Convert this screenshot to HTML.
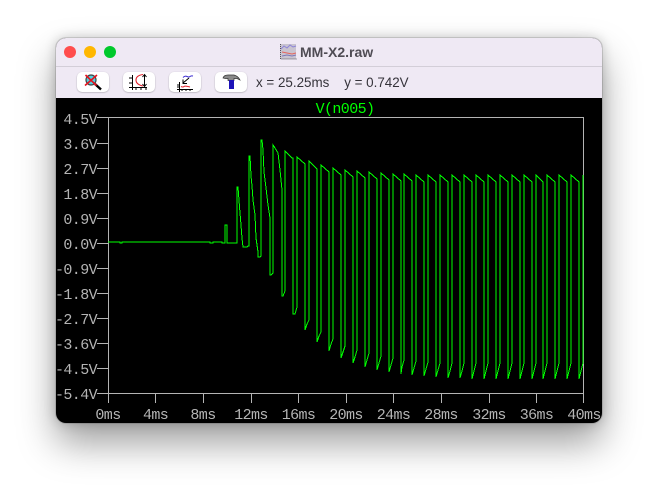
<!DOCTYPE html>
<html><head><meta charset="utf-8"><style>
html,body{margin:0;padding:0;background:#fff;width:658px;height:497px;overflow:hidden}
#w{position:absolute;left:56px;top:38px;width:546px;height:385px;border-radius:10px;background:#000;box-shadow:0 20px 38px rgba(0,0,0,.38),0 0 12px rgba(0,0,0,.2),0 0 0 1px rgba(0,0,0,.12)}
#h{position:absolute;left:0;top:0;width:546px;height:60px;background:#efe9f4;border-radius:10px 10px 0 0}
#sep{position:absolute;left:0;top:28px;width:546px;height:1px;background:#d3ced8}
.d{position:absolute;top:8px;width:12px;height:12px;border-radius:50%}
#t{position:absolute;left:244px;top:6px;font:bold 14px/16px "Liberation Sans",sans-serif;color:#4f4c54}
#c{position:absolute;left:200px;top:37px;font:13.4px/16px "Liberation Sans",sans-serif;color:#35333a;white-space:pre}
.b{position:absolute;top:34px;width:32px;height:20px;background:#fff;border-radius:5px;box-shadow:0 .5px 1.5px rgba(0,0,0,.3)}
svg{position:absolute;left:0;top:0}
text{font-family:"Liberation Mono",monospace;font-size:15px;letter-spacing:-.6px;fill:#b4b4b4}
</style></head><body>
<div id="w">
<div id="h"></div><div id="sep"></div>
<div class="d" style="left:8px;background:#ff4d4d"></div>
<div class="d" style="left:28px;background:#ffb700"></div>
<div class="d" style="left:48px;background:#00c92c"></div>
<div id="t">MM-X2.raw</div>
<div class="b" style="left:21px"></div><div class="b" style="left:67px"></div><div class="b" style="left:113px"></div><div class="b" style="left:159px"></div>
<div id="c">x = 25.25ms    y = 0.742V</div>
</div>
<svg width="658" height="497" viewBox="0 0 658 497">
<!-- title icon -->
<rect x="280" y="44" width="16" height="15" fill="#c9c4d0"/>
<path d="M281 49l3-3 3 2 3-3 3 2 3-1" fill="none" stroke="#8d84d8" stroke-width="1"/>
<path d="M282 52l5 1 5 1 4-1" fill="none" stroke="#e5655e" stroke-width="1"/>
<path d="M282 56l5-1 5 1 4-1" fill="none" stroke="#7d78b8" stroke-width="1"/>
<path d="M280.500 44v15h16" fill="none" stroke="#55525a" stroke-width="1" stroke-dasharray="1 1"/>
<!-- icon 1 -->
<circle cx="91" cy="80" r="5" fill="#4fd0e0" stroke="#444" stroke-width="1.200"/>
<path d="M95 84l6 5.500" stroke="#000" stroke-width="2.400" fill="none"/>
<path d="M85.500 75l11 10.500M97 75l-12 10.500" stroke="#e8101c" stroke-width="1.600" fill="none"/>
<!-- icon 2 -->
<path d="M132.500 75v15M129 87.500h18" stroke="#000" stroke-width="1" fill="none"/>
<path d="M129 78h3M129 83h3M136 87v3M141 87v3M146 87v3" stroke="#000" stroke-width="1" fill="none"/>
<path d="M143 74.500q-7 1-7 5.500t7 6" stroke="#e2202a" stroke-width="1.100" fill="none"/>
<path d="M144.500 75v11M142.500 77l2-2.500 2 2.500M142.500 84l2 2.500 2-2.500" stroke="#000" stroke-width="1" fill="none"/>
<!-- icon 3 -->
<path d="M179.500 82v10M177 89.500h16M177 85h2M177 87h2M182 89v2M186 89v2M190 89v2" stroke="#000" stroke-width="1" fill="none"/>
<path d="M183 77.500q2-2 4-1t3 0 3-.500" stroke="#3a2ad0" stroke-width="1" fill="none"/>
<path d="M181 86.500q2 1 3 0t6 .500" stroke="#e2202a" stroke-width="1" fill="none"/>
<path d="M189 78l-6 5M183 79.500v4h4" stroke="#000" stroke-width="1" fill="none"/>
<!-- icon 4 -->
<path d="M223 78q1-3 5-3h6q4 1 6 5l-3-1.500h-3v2h-6v-2h-2.500z" fill="#8a8a8a" stroke="#333" stroke-width=".7"/>
<rect x="229" y="80" width="5" height="9" fill="#1d12b8"/>
<!-- plot -->
<g stroke="#b4b4b4" stroke-width="1" fill="none" shape-rendering="crispEdges">
<path d="M108.500 117.500H583.500V393.500H108.500ZM108.500 393.500V403M155.500 393.500V403M203.500 393.500V403M251.500 393.500V403M298.500 393.500V403M346.500 393.500V403M393.500 393.500V403M441.500 393.500V403M489.500 393.500V403M536.500 393.500V403M583.500 393.500V403"/>
<path d="M97 117.500H108M97 143.500H108M97 168.500H108M97 193.500H108M97 218.500H108M97 243.500H108M97 268.500H108M97 293.500H108M97 318.500H108M97 343.500H108M97 368.500H108M97 393.500H108"/>
</g>
<g text-anchor="end">
<text x="97" y="124">4.5V</text><text x="97" y="149">3.6V</text><text x="97" y="174">2.7V</text><text x="97" y="199">1.8V</text><text x="97" y="224">0.9V</text><text x="97" y="249">0.0V</text><text x="97" y="274">-0.9V</text><text x="97" y="299">-1.8V</text><text x="97" y="324">-2.7V</text><text x="97" y="349">-3.6V</text><text x="97" y="374">-4.5V</text><text x="97" y="399">-5.4V</text>
</g>
<g text-anchor="middle">
<text x="108" y="419">0ms</text><text x="155.600" y="419">4ms</text><text x="203" y="419">8ms</text><text x="251" y="419">12ms</text><text x="298.500" y="419">16ms</text><text x="346" y="419">20ms</text><text x="393.500" y="419">24ms</text><text x="441" y="419">28ms</text><text x="489" y="419">32ms</text><text x="536.500" y="419">36ms</text><text x="584" y="419">40ms</text>
</g>
<text x="345" y="113" text-anchor="middle" style="fill:#00ff00">V(n005)</text>
<path fill="none" stroke="#00ff00" stroke-width="1" shape-rendering="crispEdges" d="M108 242H120V243H122V242H210V243H213V242H222V243H225V225H227V243H237V187H238L239 200 240 213 241 225 242 238 243 247H247L248 246H249V156H250L251 176 252 186 253 200 255 215 256 238 258 252V257H260L261 256V140H262L263 150 264 172 266 188 268 205 270 218V275H271L273 273V145L275 148 278 153 280 170 282 190V296H283L285 291V151L292 158H293V314H295L297 307V157L305 164V330L307 324 309 320V161L317 169V342L319 336 321 332V165L329 172V351L331 344 333 339V168L341 175V358L343 352 345 346V170L353 177V363L355 357 357 350V171L365 178V367L367 360 369 353V172L377 179V370L379 363 381 356V173L389 180V372L391 365 393 358V174L401 181V374L402 367 404 360V174L412 181V375L414 368 416 361V175L424 182V376L426 369 428 362V175L436 182V377L438 370 440 363V175L448 182V378L450 371 452 363V175L460 182V378L462 371 464 363V175L472 182V379L474 371 476 363V175L484 182V379L486 371 488 363V175L496 182V379L498 371 500 363V175L508 182V379L510 371 512 363V175L520 182V379L522 371 524 363V175L532 182V379L534 371 536 363V175L543 182V379L545 371 547 363V175L555 182V379L557 371 559 363V175L567 182V379L569 371 571 363V175L579 182V379L581 371 583 363V175"/>
</svg>
</body></html>
